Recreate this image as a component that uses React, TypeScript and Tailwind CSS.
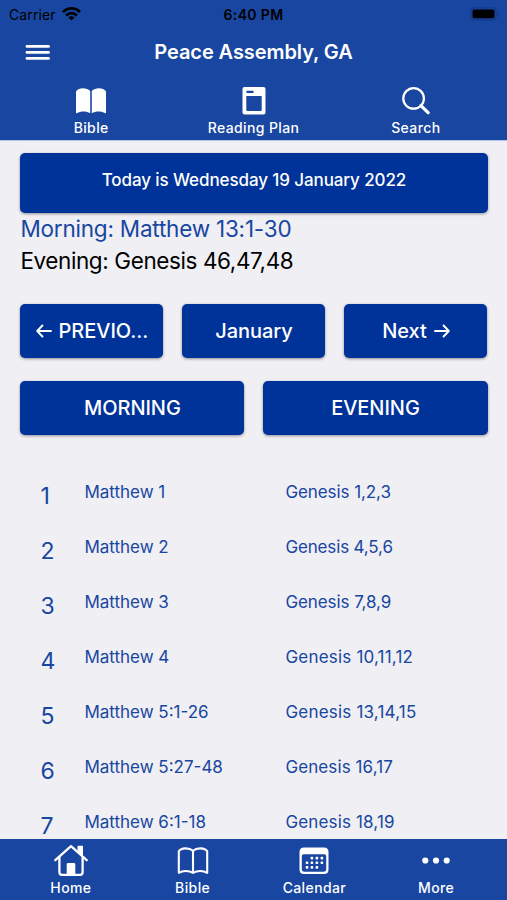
import type { ReactNode } from "react";

const readings = [
  { day: "1", morning: "Matthew 1", evening: "Genesis 1,2,3", spacing: "tracking-[-0.08px]" },
  { day: "2", morning: "Matthew 2", evening: "Genesis 4,5,6", spacing: "tracking-[-0.15px]" },
  { day: "3", morning: "Matthew 3", evening: "Genesis 7,8,9", spacing: "tracking-[-0.08px]" },
  { day: "4", morning: "Matthew 4", evening: "Genesis 10,11,12", spacing: "tracking-[0.2px]" },
  { day: "5", morning: "Matthew 5:1-26", evening: "Genesis 13,14,15", spacing: "tracking-[0.2px]" },
  { day: "6", morning: "Matthew 5:27-48", evening: "Genesis 16,17", spacing: "tracking-[0.1px]" },
  { day: "7", morning: "Matthew 6:1-18", evening: "Genesis 18,19", spacing: "tracking-[0.15px]" },
];

function WifiIcon() {
  return (
    <svg width="19" height="15" viewBox="0 0 19 15" fill="none" stroke="black" strokeWidth="2.7">
      <path d="M1 5.1C5.8 .1 13.2 .1 18 5.1" />
      <path d="M4.1 8.5C7.2 5.3 11.8 5.3 14.9 8.5" />
      <path d="M9.5 13.5L6.4 10.4C8.2 8.7 10.8 8.7 12.6 10.4Z" fill="black" stroke="none" />
    </svg>
  );
}

function BatteryIcon() {
  return (
    <svg width="30" height="14" viewBox="0 0 30 14">
      <rect x=".8" y=".8" width="25.4" height="12" rx="3.6" fill="none" stroke="#12398a" strokeWidth="1.2" />
      <rect x="2.5" y="2.4" width="22" height="8.8" rx="1.6" fill="black" />
      <path d="M27.5 5V9Q29 8.4 29 7T27.5 5Z" fill="#12398a" />
    </svg>
  );
}

function MenuIcon() {
  return (
    <svg width="26" height="17" viewBox="0 0 26 17" stroke="white" strokeWidth="2.7" strokeLinecap="round">
      <path d="M1.9 2.4H23.6M1.9 8.4H23.6M1.9 14.4H23.6" />
    </svg>
  );
}

function BookFilledIcon() {
  return (
    <svg width="32" height="28" viewBox="0 0 32 28" fill="white">
      <path d="M1 4.5C3.5 .6 11.5 .2 15.2 4V26.2C11.5 23.8 5.5 23.8 1.8 26.2Q1 26.6 1 25.6Z" />
      <path d="M31 4.5C28.5 .6 20.5 .2 16.8 4V26.2C20.5 23.8 26.5 23.8 30.2 26.2Q31 26.6 31 25.6Z" />
    </svg>
  );
}

function PlanIcon() {
  return (
    <svg width="25" height="28" viewBox="0 0 25 28">
      <path
        fillRule="evenodd"
        fill="white"
        d="M3.5 0H22.5Q24.5 0 24.5 2V25.5Q24.5 27.5 22.5 27.5H3.5Q1.5 27.5 1.5 25.5V2Q1.5 0 3.5 0ZM5.3 9V23Q5.3 24 6.3 24H19.7Q20.7 24 20.7 23V9ZM5.5 3.8V6H12.5V3.8Z"
      />
    </svg>
  );
}

function SearchIcon() {
  return (
    <svg width="28" height="28" viewBox="0 0 28 28" fill="none" stroke="white">
      <circle cx="11.6" cy="11.4" r="10.3" strokeWidth="2.2" />
      <path d="M18.9 18.6L26.1 25.7" strokeWidth="3.2" strokeLinecap="round" />
    </svg>
  );
}

function HomeIcon() {
  return (
    <svg width="34" height="32" viewBox="0 0 34 32" fill="none" stroke="white" strokeWidth="2.3" strokeLinecap="round" strokeLinejoin="round">
      <path d="M1.3 15.2L17 1.2L32.7 15.2" />
      <path d="M5.4 12.7V27.3Q5.4 29.8 7.9 29.8H26.1Q28.6 29.8 28.6 27.3V12.7" />
      <path d="M24.2 1.5H28.3V11L24.2 7.4Z" fill="white" strokeWidth="1.4" />
      <path d="M12.7 30V19.4Q12.7 18 14.1 18H19.9Q21.3 18 21.3 19.4V30Z" fill="white" stroke="none" />
    </svg>
  );
}

function BookIcon() {
  return (
    <svg width="32" height="28" viewBox="0 0 32 28" fill="none" stroke="white" strokeWidth="2.1" strokeLinejoin="round">
      <path d="M16 3.7C12.2 .5 4.2 .5 1.8 4.2V25.8C5.5 23.4 12 23.4 16 25.8C20 23.4 26.5 23.4 30.2 25.8V4.2C27.8 .5 19.8 .5 16 3.7ZM16 3.7V25.8" />
    </svg>
  );
}

const calendarDots = [
  [11.6, 11], [16.6, 11], [21.6, 11],
  [6.7, 15.6], [11.6, 15.6], [16.6, 15.6], [21.6, 15.6],
  [6.7, 20.3], [11.6, 20.3], [16.6, 20.3],
];

function CalendarIcon() {
  return (
    <svg width="30" height="28" viewBox="0 0 30 28" fill="white">
      <path
        fillRule="evenodd"
        d="M5 .5H25Q29.5 .5 29.5 5V22.5Q29.5 27 25 27H5Q.5 27 .5 22.5V5Q.5 .5 5 .5ZM4.7 7.2Q2.8 7.2 2.8 9V22Q2.8 24.7 5.5 24.7H24.5Q27.2 24.7 27.2 22V9Q27.2 7.2 25.3 7.2Z"
      />
      {calendarDots.map(([x, y]) => (
        <rect key={`${x}-${y}`} x={x} y={y - 1.2} width="2.6" height="2.6" rx=".7" />
      ))}
    </svg>
  );
}

function MoreIcon() {
  return (
    <svg width="28" height="8" viewBox="0 0 28 8" fill="white">
      <circle cx="3.3" cy="3.5" r="3.1" />
      <circle cx="14" cy="3.5" r="3.1" />
      <circle cx="24.7" cy="3.5" r="3.1" />
    </svg>
  );
}

function Arrow({ flip = false }: { flip?: boolean }) {
  return (
    <svg
      width="16" height="14" viewBox="0 0 16 14" fill="none" stroke="white" strokeWidth="1.9"
      strokeLinecap="round" strokeLinejoin="round"
      className={flip ? "shrink-0 rotate-180" : "shrink-0"}
    >
      <path d="M15 7H1.2M6.4 1.5L1.2 7L6.4 12.5" />
    </svg>
  );
}

function Tab({ icon, label }: { icon: ReactNode; label: string }) {
  return (
    <div className="flex flex-1 flex-col items-center">
      <div className="flex h-8 items-center justify-center">{icon}</div>
      <span className="text-[14px] leading-[22px] font-medium tracking-[0.38px]">{label}</span>
    </div>
  );
}

function Button({ children }: { children: ReactNode }) {
  return (
    <button className="flex h-[53.5px] flex-1 items-center justify-center gap-[7px] rounded-[5px] bg-[#003399] text-[20px] font-medium tracking-[-0.05px] text-white shadow-[0_1px_3px_rgba(0,0,0,0.4)]">
      {children}
    </button>
  );
}

export default function App() {
  return (
    <div className="flex h-[900px] w-[507px] flex-col overflow-hidden bg-[#efeff4] font-['Inter','Liberation_Sans',sans-serif] text-[#1846a0]">
      <header className="h-[141px] shrink-0 border-b border-[#b4c4e8] bg-[#1846a0] text-white">
        <div className="grid h-7 grid-cols-3 items-center px-[7px] text-black">
          <div className="flex items-center gap-[6px] pl-[2px]">
            <span className="text-[14px] tracking-[0.1px]">Carrier</span>
            <WifiIcon />
          </div>
          <span className="text-center text-[14px] font-semibold tracking-[0.35px]">6:40 PM</span>
          <div className="flex justify-end"><BatteryIcon /></div>
        </div>
        <div className="grid h-12 grid-cols-[75px_1fr_75px] items-center">
          <div className="pl-[25px]"><MenuIcon /></div>
          <h1 className="text-center text-[20px] font-semibold tracking-[-0.08px]">Peace Assembly, GA</h1>
        </div>
        <nav className="flex px-[10px] pt-[9px]">
          <Tab icon={<BookFilledIcon />} label="Bible" />
          <Tab icon={<PlanIcon />} label="Reading Plan" />
          <Tab icon={<SearchIcon />} label="Search" />
        </nav>
      </header>

      <main className="min-h-0 flex-1 overflow-hidden pt-[11.5px] pr-[19.5px] pl-[20.4px]">
        <div className="flex h-[60.5px] justify-center rounded-[5px] bg-[#003399] pt-[15px] text-[17px] leading-6 font-medium tracking-[-0.1px] text-white shadow-[0_1px_3px_rgba(0,0,0,0.4)]">
          <span>Today is Wednesday 19 January 2022</span>
        </div>
        <div className="text-[22.5px] leading-8 tracking-[-0.21px]"><span>Morning: Matthew 13:1-30</span></div>
        <div className="text-[22.5px] leading-8 tracking-[-0.4px] text-black"><span>Evening: Genesis 46,47,48</span></div>
        <div className="mt-[27px] flex gap-[19px]">
          <Button><Arrow /><span>PREVIO...</span></Button>
          <Button><span>January</span></Button>
          <Button><span>Next</span><Arrow flip /></Button>
        </div>
        <div className="mt-[23.5px] flex gap-[19px]">
          <Button><span>MORNING</span></Button>
          <Button><span>EVENING</span></Button>
        </div>
        <div className="mt-11">
          {readings.map(({ day, morning, evening, spacing }) => (
            <div key={day} className="grid h-[55px] grid-cols-[44px_201px_1fr] pl-5">
              <span className="pt-[5px] text-[23px] leading-6">{day}</span>
              <span className="text-[17px] leading-[27px]">{morning}</span>
              <span className={`text-[17px] leading-[27px] ${spacing}`}>{evening}</span>
            </div>
          ))}
        </div>
      </main>

      <footer className="flex h-[61px] shrink-0 bg-[#1846a0] px-[10px] pt-[5.5px] text-white">
        <Tab icon={<HomeIcon />} label="Home" />
        <Tab icon={<BookIcon />} label="Bible" />
        <Tab icon={<CalendarIcon />} label="Calendar" />
        <Tab icon={<MoreIcon />} label="More" />
      </footer>
    </div>
  );
}
